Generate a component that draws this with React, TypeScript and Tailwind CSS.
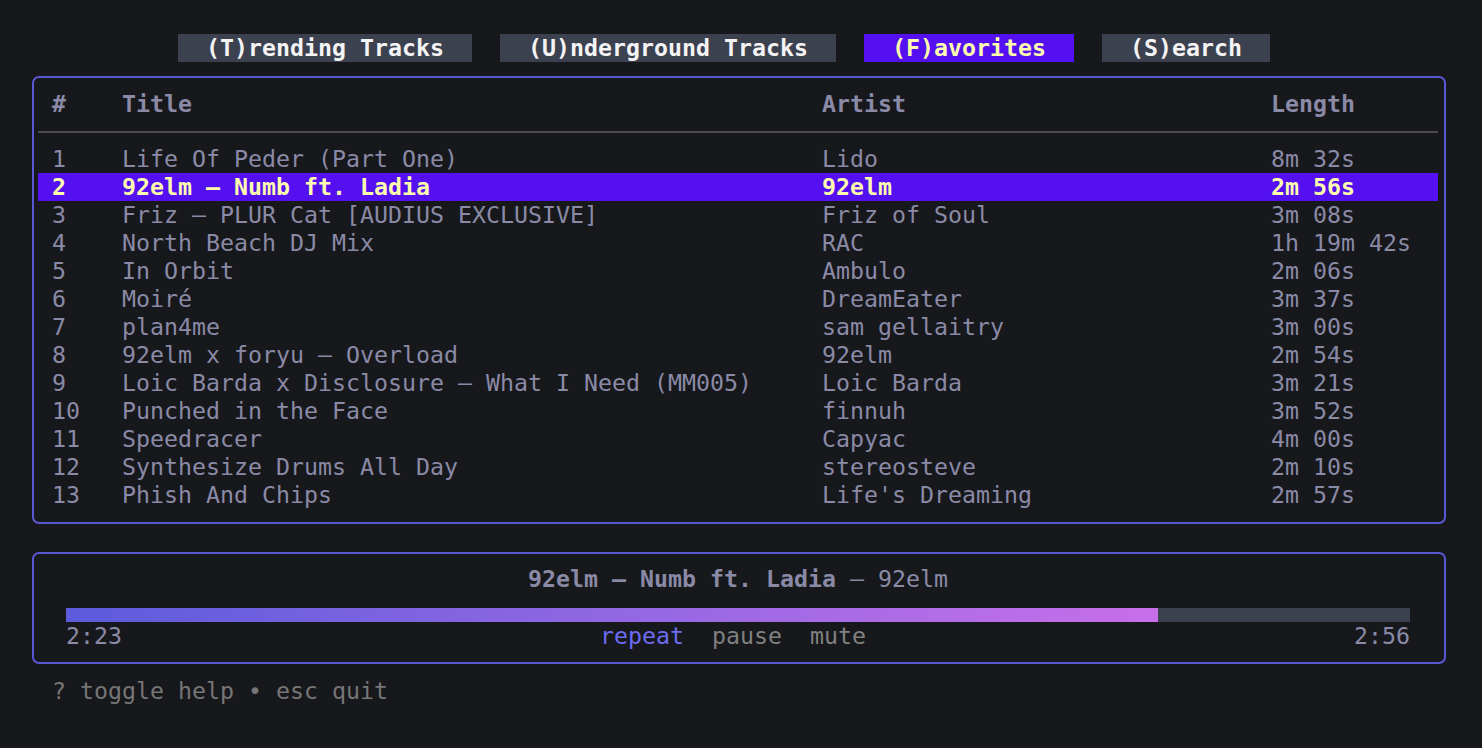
import React from "react";

const tracks: [string, string, string, string][] = [
  ["1", "Life Of Peder (Part One)", "Lido", "8m 32s"],
  ["2", "92elm – Numb ft. Ladia", "92elm", "2m 56s"],
  ["3", "Friz – PLUR Cat [AUDIUS EXCLUSIVE]", "Friz of Soul", "3m 08s"],
  ["4", "North Beach DJ Mix", "RAC", "1h 19m 42s"],
  ["5", "In Orbit", "Ambulo", "2m 06s"],
  ["6", "Moiré", "DreamEater", "3m 37s"],
  ["7", "plan4me", "sam gellaitry", "3m 00s"],
  ["8", "92elm x foryu – Overload", "92elm", "2m 54s"],
  ["9", "Loic Barda x Disclosure – What I Need (MM005)", "Loic Barda", "3m 21s"],
  ["10", "Punched in the Face", "finnuh", "3m 52s"],
  ["11", "Speedracer", "Capyac", "4m 00s"],
  ["12", "Synthesize Drums All Day", "stereosteve", "2m 10s"],
  ["13", "Phish And Chips", "Life's Dreaming", "2m 57s"],
];

function Row({ cells, cls }: { cells: string[]; cls: string }) {
  return (
    <div className={`flex h-[28px] w-[1400px] items-center whitespace-pre ${cls}`}>
      <div className="w-[70px] pl-[14px]">{cells[0]}</div>
      <div className="w-[700px] pl-[14px]">{cells[1]}</div>
      <div className="w-[449px] pl-[14px]">{cells[2]}</div>
      <div className="w-[181px] pl-[14px]">{cells[3]}</div>
    </div>
  );
}

export default function App() {
  return (
    <div
      className="w-[1482px] h-[748px] bg-[#17181c] text-[#8a8aa6] overflow-hidden leading-[28px] text-[23.26px]"
      style={{ fontFamily: '"DejaVu Sans Mono", "Liberation Mono", monospace' }}
    >
      {/* tabs */}
      <div className="pt-[34px] pl-[178px] flex gap-[28px] font-bold">
        <div className="h-[28px] px-[28px] bg-[#3c4150] text-[#f4f4f4] whitespace-pre">(T)rending Tracks</div>
        <div className="h-[28px] px-[28px] bg-[#3c4150] text-[#f4f4f4] whitespace-pre">(U)nderground Tracks</div>
        <div className="h-[28px] px-[28px] bg-[#5510f2] text-[#fdfcae] whitespace-pre">(F)avorites</div>
        <div className="h-[28px] px-[28px] bg-[#3c4150] text-[#f4f4f4] whitespace-pre">(S)earch</div>
      </div>

      {/* table panel */}
      <div className="mt-[14px] ml-[32px] w-[1414px] h-[448px] border-2 border-[#5a57d4] rounded-[7px] pl-[4px] pt-[11px]">
        <Row cells={["#", "Title", "Artist", "Length"]} cls="font-bold text-[#8a8aa6] pt-[1px]" />
        <div className="h-[28px] w-[1400px] flex items-center pt-[2px]">
          <div className="w-full h-[2px] bg-[#4a4a4e]" />
        </div>
        {tracks.map((t, i) => (
          <Row
            key={i}
            cells={t}
            cls={i === 1 ? "bg-[#5510f2] text-[#fdfcae] font-bold" : "text-[#8a8aa6]"}
          />
        ))}
      </div>

      {/* player panel */}
      <div className="mt-[28px] ml-[32px] w-[1414px] h-[112px] border-2 border-[#5a57d4] rounded-[7px] pl-[32px] pt-[11px]">
        <div className="h-[28px] w-[1344px] text-center whitespace-pre">
          <span className="font-bold">92elm – Numb ft. Ladia</span>
          <span> – 92elm</span>
        </div>
        <div className="mt-[15px] h-[14px] w-[1344px] bg-[#3c4150] flex">
          <div className="h-full w-[1092px] bg-gradient-to-r from-[#5b5bdc] to-[#c76fe9]" />
        </div>
        <div className="h-[28px] w-[1344px] flex whitespace-pre">
          <div className="w-[534px]">2:23</div>
          <div className="whitespace-pre">
            <span className="text-[#6c6cf2]">repeat</span>
            <span className="text-[#808080]">  pause  mute</span>
          </div>
          <div className="flex-1 text-right">2:56</div>
        </div>
      </div>

      {/* help */}
      <div className="mt-[13px] pl-[52px] h-[28px] text-[#767676] whitespace-pre">? toggle help • esc quit</div>
    </div>
  );
}
